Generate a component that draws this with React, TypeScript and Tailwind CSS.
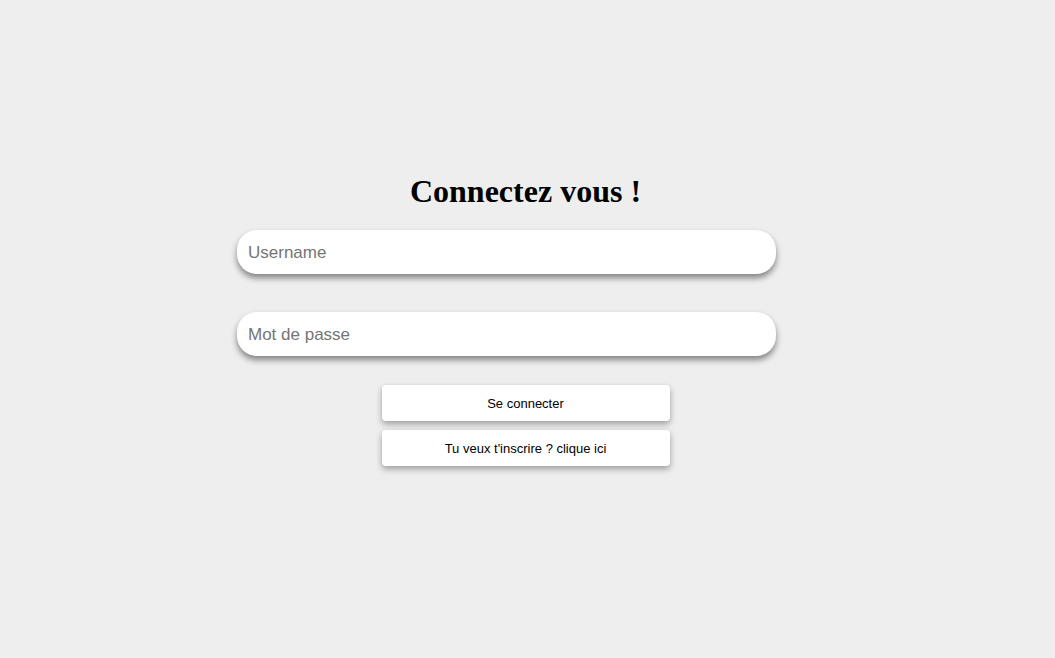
export default function App() {
  return (
    <div className="min-h-[658px] w-full bg-[#eeeeee] flex flex-col items-center pt-[172px] pr-[4px]">
      <h1 className="text-[32px] leading-[38px] font-bold text-black font-['Liberation_Serif','Times_New_Roman',serif]">
        Connectez vous !
      </h1>
      <form className="flex flex-col items-center mt-[20px] font-['Liberation_Sans',Arial,sans-serif]">
        <input
          type="text"
          placeholder="Username"
          className="w-[539px] h-[44px] mr-[38px] rounded-[20px] bg-white px-[11px] pt-[1px] text-[17px] text-black placeholder:text-[#757575] outline-none shadow-[0_4px_6px_rgba(0,0,0,0.45)]"
        />
        <input
          type="password"
          placeholder="Mot de passe"
          className="w-[539px] h-[44px] mr-[38px] mt-[38px] rounded-[20px] bg-white px-[11px] pt-[1px] text-[17px] text-black placeholder:text-[#757575] outline-none shadow-[0_4px_6px_rgba(0,0,0,0.45)]"
        />
        <button
          type="button"
          className="w-[288px] h-[36px] mt-[29px] pt-[2px] rounded-[4px] bg-white text-[13px] text-black shadow-[0_3px_6px_rgba(0,0,0,0.35)]"
        >
          Se connecter
        </button>
        <button
          type="button"
          className="w-[288px] h-[36px] mt-[9px] pt-[2px] rounded-[4px] bg-white text-[13px] text-black shadow-[0_3px_6px_rgba(0,0,0,0.35)]"
        >
          Tu veux t'inscrire ? clique ici
        </button>
      </form>
    </div>
  );
}
